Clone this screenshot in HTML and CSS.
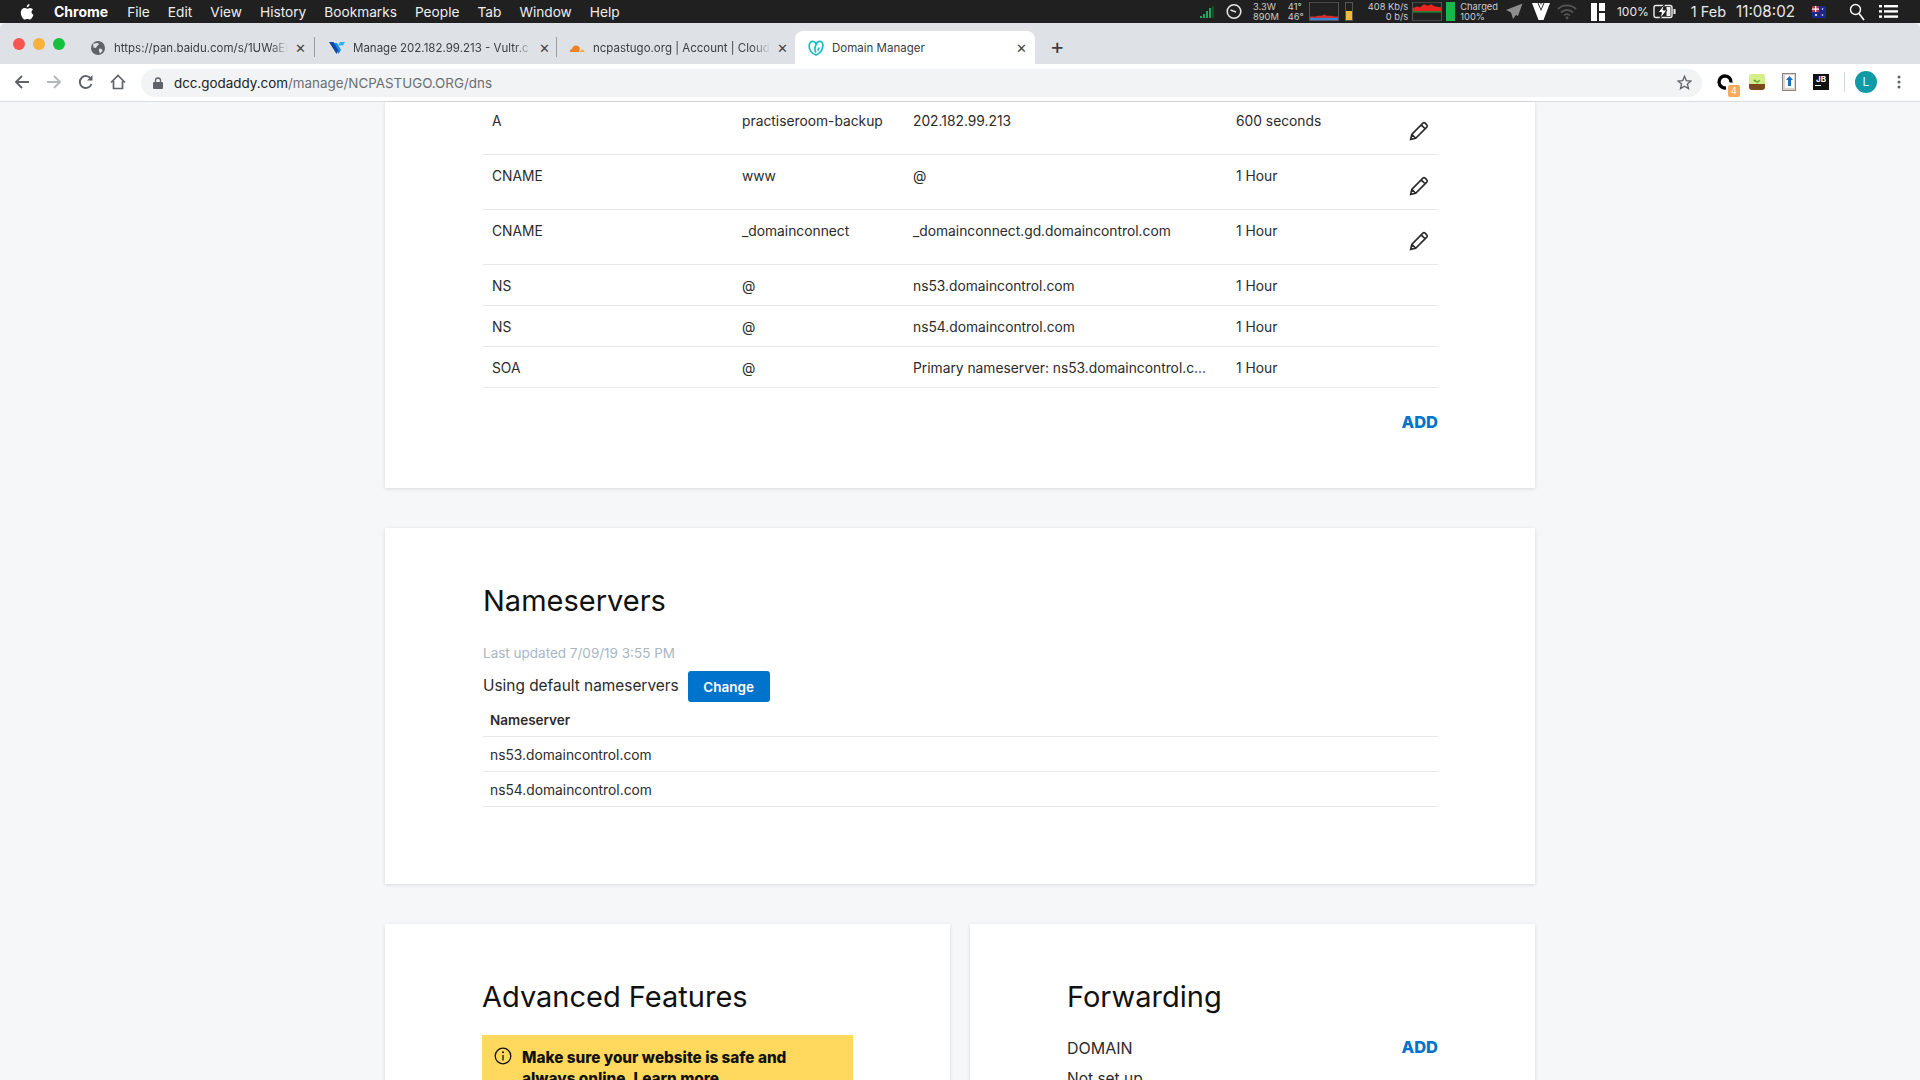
FILE: index.html
```html
<!DOCTYPE html>
<html lang="en">
<head>
  <meta charset="UTF-8">
  <title>Domain Manager</title>
  <link rel="stylesheet" href="styles.css">
</head>
<body>
  <div class="menubar">
    <svg class="apple" width="14" height="16" viewBox="0 0 14 16"><path fill="#fff" d="M9.6 0c.1 1.700-1.300 3.300-2.900 3.200C6.500 1.600 8.100.1 9.600 0zM13 5.400c-1 .7-1.500 1.500-1.500 2.600 0 1.300.8 2.300 2 2.800-.6 1.900-2.100 4.700-3.600 4.700-.9 0-1.400-.6-2.500-.6s-1.700.6-2.500.6C3 15.500.8 11.800.8 8.700c0-3 1.900-4.700 3.700-4.700 1.100 0 1.900.7 2.600.7s1.600-.8 2.900-.8c1.100 0 2.200.5 3 1.500z"/></svg>
    <span class="menu-app">Chrome</span>
    <span class="menu-item">File</span>
    <span class="menu-item">Edit</span>
    <span class="menu-item">View</span>
    <span class="menu-item">History</span>
    <span class="menu-item">Bookmarks</span>
    <span class="menu-item">People</span>
    <span class="menu-item">Tab</span>
    <span class="menu-item">Window</span>
    <span class="menu-item">Help</span>

    <div class="status">
      <svg class="st-signal" width="16" height="14" viewBox="0 0 16 14"><g fill="#1fa855"><rect x="0" y="11" width="2" height="2"/><rect x="3" y="9" width="2" height="4"/><rect x="6" y="6" width="2" height="7"/><rect x="9" y="3" width="2" height="10"/></g><rect x="12" y="1" width="2" height="12" fill="#14502c"/></svg>
      <svg class="st-clock" width="16" height="17" viewBox="0 0 16 17"><circle cx="8" cy="8.500" r="6.800" fill="none" stroke="#e4e4e4" stroke-width="1.600"/><path d="M4.500 7 L10 9" stroke="#e4e4e4" stroke-width="1.500"/></svg>
      <div class="st-two st-power"><span>3.3W</span><span>890M</span></div>
      <div class="st-two st-temp"><span>41°</span><span>46°</span></div>
      <svg class="st-graph" width="30" height="19" viewBox="0 0 31 25" preserveAspectRatio="none"><rect x=".5" y=".5" width="30" height="24" fill="#222" stroke="#555"/><path d="M1 24V19h6l2-1 4 0 3-2 2 2h5l3 1h4v5z" fill="#d92c2c"/><path d="M1 24v-3h29v3z" fill="#2f86d8"/></svg>
      <div class="st-level"><span class="st-level-fill"></span></div>
      <div class="st-two st-net"><span>408 Kb/s</span><span>0 b/s</span></div>
      <svg class="st-graph-net" width="30" height="19" viewBox="0 0 30 25" preserveAspectRatio="none"><rect x=".5" y=".5" width="29" height="24" fill="#222" stroke="#555"/><path d="M1 13V8l4-2 3 1 4-4 4 2 3-2 4 3 6 1v6z" fill="#e8261e"/><rect x="1" y="12" width="28" height="2" fill="#188a3c"/></svg>
      <span class="st-charge"></span>
      <div class="st-two st-charged"><span>Charged</span><span>100%</span></div>
      <svg class="st-plane" width="17" height="17" viewBox="0 0 17 17"><path fill="#8d8d8d" d="M16.500.5 0 7l5 2.500L7 16l3-4 2 1z"/></svg>
      <svg class="st-v" width="18" height="19" viewBox="0 0 18 19"><path fill="#fff" d="M0 1h5.500L9 9l3.500-8H18l-6.500 17h-5zM6.500 1h1.800L9 3l.7-2h1.800L9 7z"/></svg>
      <svg class="st-wifi" width="20" height="17" viewBox="0 0 20 17"><g fill="none" stroke="#555" stroke-width="1.800"><path d="M1 6a13 13 0 0 1 18 0"/><path d="M4 9.500a8.500 8.500 0 0 1 12 0"/><path d="M7 12.500a4 4 0 0 1 6 0"/></g><circle cx="10" cy="15" r="1.400" fill="#555"/></svg>
      <svg class="st-panel" width="14" height="18" viewBox="0 0 14 18"><g fill="#fff"><rect width="6" height="18"/><rect x="8" width="6" height="8"/><rect x="8" y="10" width="6" height="8"/></g></svg>
      <span class="st-text st-percent">100%</span>
      <svg class="st-battery" width="23" height="15" viewBox="0 0 23 15"><rect x="1" y="1.500" width="18" height="12" rx="2" fill="none" stroke="#eee" stroke-width="1.400"/><path fill="#eee" d="M20.500 5h2v5h-2zM13.500 3h4v9h-4z"/><path fill="#fff" stroke="#222" d="M11.500 0 5 8.500h3.500L7 15l7-9h-4z"/></svg>
      <span class="st-text st-date">1 Feb</span>
      <span class="st-text st-time">11:08:02</span>
      <svg class="st-flag" width="14" height="14" viewBox="0 0 14 14"><rect y="1" width="14" height="12" rx="2" fill="#1b2a8a"/><rect y="1" width="7" height="6" fill="#a83a50"/><g fill="#fff"><rect x="3" y="1" width="1.200" height="6"/><rect y="3.500" width="7" height="1.200"/><circle cx="10.500" cy="4" r=".8"/><circle cx="10.500" cy="10" r=".8"/><circle cx="4" cy="10" r="1"/></g></svg>
      <svg class="st-search" width="16" height="18" viewBox="0 0 16 18"><circle cx="6.500" cy="6.500" r="5" fill="none" stroke="#fff" stroke-width="1.400"/><path d="M10 10.500 15 17" stroke="#fff" stroke-width="1.600"/></svg>
      <svg class="st-list" width="19" height="13" viewBox="0 0 19 13"><g fill="#fff"><rect width="3" height="2.400"/><rect x="5" width="14" height="2.400"/><rect y="5.200" width="3" height="2.400"/><rect x="5" y="5.200" width="14" height="2.400"/><rect y="10.400" width="3" height="2.400"/><rect x="5" y="10.400" width="14" height="2.400"/></g></svg>
    </div>
  </div>

  <div class="tabstrip">
    <div class="lights">
      <span class="light light-red"></span>
      <span class="light light-yellow"></span>
      <span class="light light-green"></span>
    </div>
    <div class="tab tab-first">
      <svg width="16" height="16" viewBox="0 0 16 16"><circle cx="8" cy="8" r="7" fill="#5f6368"/><path fill="#dee1e6" d="M3 3.500c2 0 3-.5 5-.5l1 1.500-2 1.500-1 2-2.500-.5zM9 8.500l3 .5 .5 2-2.500 2.500-1-2z"/></svg>
      <span class="tab-title">https://pan.baidu.com/s/1UWaEi</span>
      <span class="tab-close">✕</span>
    </div>
    <div class="tab-sep"></div>
    <div class="tab tab-second">
      <svg width="16" height="16" viewBox="0 0 16 16"><path fill="#1e88e5" d="M4 3h4l4 7-2.500 4z"/><path fill="#0d47a1" d="M0 2h4.500l4.800 8.500L7.500 14z"/><path fill="#29b6f6" d="M11 2h5l-2 3.500h-5z"/></svg>
      <span class="tab-title">Manage 202.182.99.213 - Vultr.c</span>
      <span class="tab-close">✕</span>
    </div>
    <div class="tab-sep"></div>
    <div class="tab tab-third">
      <svg width="16" height="16" viewBox="0 0 16 16"><path fill="#f48120" d="M1 12c-.5-1.500.5-3 2-3 .5-2 2-3.500 4-3.500 1.800 0 3.300 1 3.800 2.600L10 12z"/><path fill="#faad3f" d="M11 12c.5-1.500 1-2.500 2-2.500s2.500 1 2.500 2.500z"/></svg>
      <span class="tab-title">ncpastugo.org | Account | Cloud</span>
      <span class="tab-close">✕</span>
    </div>
    <div class="tab tab-active">
      <svg width="16" height="16" viewBox="0 0 16 16"><path fill="none" stroke="#1bbdc6" stroke-width="1.700" d="M8 15C3 13 1 9 1.200 5.500 1.400 2.500 3.500 1 5.500 1.500 7 2 8 3.500 8 5c.5-2 2-3.800 4-3.700 2.300.2 3.200 2.400 2.800 5C14.300 10 12 13.500 8 15zM8 5C6.800 7 6.600 10 8 12.500M11 7.500c0 1-.5 2.200-1.500 3"/></svg>
      <span class="tab-title">Domain Manager</span>
      <span class="tab-close">✕</span>
    </div>
    <span class="tab-new">+</span>
  </div>

  <div class="toolbar">
    <svg class="nav nav-back" width="16" height="16" viewBox="0 0 16 16"><path d="M15 8H2M8 2 2 8l6 6" fill="none" stroke="#5f6368" stroke-width="1.900"/></svg>
    <svg class="nav nav-fwd" width="16" height="16" viewBox="0 0 16 16"><path d="M1 8h13M8 2l6 6-6 6" fill="none" stroke="#b5b8bb" stroke-width="1.900"/></svg>
    <svg class="nav nav-reload" width="16" height="16" viewBox="0 0 16 16"><path d="M13.500 10a6 6 0 1 1-.5-5" fill="none" stroke="#5f6368" stroke-width="1.900"/><path d="M14.500 1v5.500H9z" fill="#5f6368"/></svg>
    <svg class="nav nav-home" width="16" height="16" viewBox="0 0 16 16"><path d="M1 8.500 8 1.500l7 7M3.500 7v7.500h9V7" fill="none" stroke="#5f6368" stroke-width="1.700"/></svg>
    <div class="omnibox">
      <svg width="10" height="12" viewBox="0 0 10 12"><rect y="5" width="10" height="7" rx="1" fill="#5f6368"/><path d="M2.500 5.500V3.500a2.500 2.500 0 0 1 5 0v2" fill="none" stroke="#5f6368" stroke-width="1.300"/></svg>
      <span class="url"><span class="url-host">dcc.godaddy.com</span>/manage/NCPASTUGO.ORG/dns</span>
      <svg class="star" width="15" height="15" viewBox="0 0 15 15"><path d="M7.500 1.300 9.300 5.600l4.700.4-3.600 3 1.100 4.600-4-2.400-4 2.400 1.100-4.600L1 6l4.700-.4z" fill="none" stroke="#5f6368" stroke-width="1.300"/></svg>
    </div>
    <div class="ext ext-first">
      <svg width="20" height="20" viewBox="0 0 20 20"><path d="M14 10.500a6 6 0 1 0-5 5.400" fill="none" stroke="#000" stroke-width="3.400"/></svg>
      <span class="ext-badge">4</span>
    </div>
    <div class="ext">
      <svg width="16" height="16" viewBox="0 0 16 16"><rect width="16" height="11" rx="2" fill="#d5ee8a"/><path d="M0 10h16v3a3 3 0 0 1-3 3H3a3 3 0 0 1-3-3z" fill="#7a4a1e"/><path d="M8 10V7M8 8C6 8 5 7 4.500 6c2 0 3 .5 3.500 2zM8 8c1.500 0 2.500-.5 3-1.500-1.500 0-2.500.5-3 1.500z" stroke="#5e9c35" fill="#5e9c35" stroke-width=".5"/></svg>
    </div>
    <div class="ext">
      <svg width="16" height="18" viewBox="0 0 16 18"><rect x="1.500" y=".5" width="13" height="17" fill="#d9d4cf" stroke="#8d8580"/><rect x="4" y="2" width="9" height="13" fill="#fff"/><path d="M8.500 3 12 7H10v6H7V7H5z" fill="#1a6fc0"/></svg>
    </div>
    <div class="ext">
      <div class="ext-jb">JB<span></span></div>
    </div>
    <div class="ext-sep"></div>
    <div class="avatar">L</div>
    <svg class="dots" width="4" height="14" viewBox="0 0 4 14"><g fill="#5f6368"><circle cx="2" cy="2" r="1.500"/><circle cx="2" cy="7" r="1.500"/><circle cx="2" cy="12" r="1.500"/></g></svg>
  </div>

  <div class="page">
    <div class="card card-dns">
      <table class="records">
        <tr class="row-tall row-top"><td>A</td><td>practiseroom-backup</td><td>202.182.99.213</td><td>600 seconds</td><td class="cell-edit"><svg width="20" height="20" viewBox="0 0 18 18"><path d="M1.500 16.500l1-4.500L12.500 2a1.500 1.500 0 0 1 2 0l1.500 1.500a1.500 1.500 0 0 1 0 2L6 15.500zM11 3.500 14.500 7M2.500 12 6 15.500" fill="none" stroke="#2b2b2b" stroke-width="1.500"/></svg></td></tr>
        <tr class="row-tall"><td>CNAME</td><td>www</td><td>@</td><td>1 Hour</td><td class="cell-edit"><svg width="20" height="20" viewBox="0 0 18 18"><path d="M1.500 16.500l1-4.500L12.500 2a1.500 1.500 0 0 1 2 0l1.500 1.500a1.500 1.500 0 0 1 0 2L6 15.500zM11 3.500 14.500 7M2.500 12 6 15.500" fill="none" stroke="#2b2b2b" stroke-width="1.500"/></svg></td></tr>
        <tr class="row-tall"><td>CNAME</td><td>_domainconnect</td><td>_domainconnect.gd.domaincontrol.com</td><td>1 Hour</td><td class="cell-edit"><svg width="20" height="20" viewBox="0 0 18 18"><path d="M1.500 16.500l1-4.500L12.500 2a1.500 1.500 0 0 1 2 0l1.500 1.500a1.500 1.500 0 0 1 0 2L6 15.500zM11 3.500 14.500 7M2.500 12 6 15.500" fill="none" stroke="#2b2b2b" stroke-width="1.500"/></svg></td></tr>
        <tr><td>NS</td><td>@</td><td>ns53.domaincontrol.com</td><td>1 Hour</td><td></td></tr>
        <tr><td>NS</td><td>@</td><td>ns54.domaincontrol.com</td><td>1 Hour</td><td></td></tr>
        <tr><td>SOA</td><td>@</td><td><div class="clip">Primary nameserver: ns53.domaincontrol.com.</div></td><td>1 Hour</td><td></td></tr>
      </table>
      <div class="add-row"><a class="add">ADD</a></div>
    </div>

    <div class="card card-ns">
      <h2>Nameservers</h2>
      <p class="updated">Last updated 7/09/19 3:55 PM</p>
      <div class="using">
        <span>Using default nameservers</span>
        <button class="btn-change">Change</button>
      </div>
      <div class="ns-head">Nameserver</div>
      <div class="ns-row">ns53.domaincontrol.com</div>
      <div class="ns-row">ns54.domaincontrol.com</div>
    </div>

    <div class="card-pair">
      <div class="card card-half">
        <h2>Advanced Features</h2>
        <div class="notice">
          <svg width="18" height="18" viewBox="0 0 18 18"><circle cx="9" cy="9" r="7.800" fill="none" stroke="#111" stroke-width="1.300"/><path d="M9 8v5.500" stroke="#111" stroke-width="1.300"/><circle cx="9" cy="5.300" r="1" fill="#111"/></svg>
          <span>Make sure your website is safe and always online. Learn more</span>
        </div>
      </div>
      <div class="card card-half">
        <h2>Forwarding</h2>
        <div class="fwd-head">
          <span>DOMAIN</span>
          <a class="add">ADD</a>
        </div>
        <div class="fwd-value">Not set up</div>
      </div>
    </div>
  </div>
</body>
</html>
```

FILE: styles.css
```css
* {
  box-sizing: border-box;
}

html, body {
  height: 1080px;
  overflow: hidden;
}

body {
  margin: 0;
  font-family: Inter, "Liberation Sans", sans-serif;
  background-color: #f5f7f8;
  color: #2b2b2b;
}

/* mac menu bar */
.menubar {
  display: flex;
  align-items: center;
  height: 23px;
  padding-left: 20px;
  background-color: #202020;
  color: #eee;
  font-size: 13.700px;
}

.menu-app {
  margin-left: 20px;
  margin-right: 19px;
  font-size: 14px;
  font-weight: 700;
  color: #fff;
}

.menu-item {
  margin-right: 18px;
}

.status {
  display: flex;
  align-items: center;
  margin-left: auto;
  font-size: 10px;
}

.status svg {
  flex: none;
}

.st-two {
  display: flex;
  flex-direction: column;
  font-size: 9.300px;
  line-height: 10px;
  color: #ccc;
}

.st-net {
  align-items: flex-end;
}

.st-text {
  font-size: 14px;
  color: #e8e8e8;
}

.st-clock { margin-left: 10px; }
.st-power { margin-left: 11px; }
.st-temp { margin-left: 9px; }
.st-graph { margin-left: 5px; }
.st-net { margin-left: 15px; }
.st-graph-net { margin-left: 4px; }
.st-charged { margin-left: 5px; }
.st-plane { margin-left: 8px; }
.st-v { margin-left: 9px; }
.st-wifi { margin-left: 7px; }
.st-panel { margin-left: 14px; }
.st-percent { margin-left: 12px; font-size: 12px; }
.st-battery { margin-left: 4px; }
.st-date { margin-left: 15px; font-size: 14.500px; }
.st-time { margin-left: 10px; font-size: 15.200px; }
.st-flag { margin-left: 17px; }
.st-search { margin-left: 23px; }
.st-list { margin-left: 14px; margin-right: 22px; }

.st-level {
  display: flex;
  align-items: flex-end;
  width: 8px;
  height: 19px;
  margin-left: 6px;
  border: 1px solid #555;
}

.st-level-fill {
  width: 100%;
  height: 9px;
  background-color: #f5b83d;
}

.st-charge {
  width: 9px;
  height: 19px;
  margin-left: 4px;
  background-color: #18b84a;
}

/* browser tabs */
.tabstrip {
  display: flex;
  align-items: flex-end;
  height: 41px;
  padding-left: 13px;
  background-color: #dee1e6;
  border-top-left-radius: 6px;
  border-top-right-radius: 6px;
  font-size: 11.500px;
  color: #3c4043;
}

.lights {
  display: flex;
  gap: 8px;
  align-self: flex-start;
  margin-top: 15px;
  margin-right: 11px;
}

.light {
  width: 12px;
  height: 12px;
  border-radius: 50%;
}

.light-red { background-color: #f5564f; }
.light-yellow { background-color: #f6b23c; }
.light-green { background-color: #15c13c; }

.tab {
  display: flex;
  align-items: center;
  width: 237px;
  height: 33px;
  padding: 0 4px 0 14px;
}

.tab-first {
  width: 238px;
  padding-right: 6px;
}

.tab-second {
  width: 241px;
}

.tab-third {
  padding-left: 12px;
}

.tab-title {
  flex: 1;
  margin-left: 8px;
  overflow: hidden;
  white-space: nowrap;
  -webkit-mask-image: linear-gradient(to right, #000 90%, transparent);
  mask-image: linear-gradient(to right, #000 90%, transparent);
}

.tab-close {
  width: 16px;
  margin-left: 4px;
  text-align: center;
  font-size: 13px;
  color: #444;
}

.tab-sep {
  width: 1px;
  height: 20px;
  margin-bottom: 7px;
  background-color: #9a9da1;
}

.tab-active {
  width: 240px;
  margin-left: 1px;
  padding-left: 13px;
  padding-right: 6px;
  background-color: #fff;
  border-radius: 8px 8px 0 0;
}

.tab-active .tab-title {
  -webkit-mask-image: none;
  mask-image: none;
}

.tab-new {
  margin: 0 0 4px 15px;
  font-size: 22px;
  font-weight: 400;
  line-height: 28px;
  color: #3c4043;
}

/* address bar */
.toolbar {
  display: flex;
  align-items: center;
  height: 38px;
  padding: 0 0 1px 14px;
  background-color: #fff;
  border-bottom: 1px solid #dadce0;
}

.nav { margin-right: 16px; flex: none; }
.nav-home { margin-right: 15px; }

.omnibox {
  display: flex;
  align-items: center;
  width: 1561px;
  height: 28px;
  margin-top: 1px;
  padding: 0 10px 0 12px;
  background-color: #f1f3f4;
  border-radius: 14px;
  font-size: 13.400px;
  color: #6a6e72;
}

.url {
  margin-left: 11px;
}

.url-host {
  color: #202124;
}

.star {
  margin-left: auto;
}

.ext {
  position: relative;
  display: flex;
  align-items: center;
  justify-content: center;
  width: 32px;
  height: 24px;
}

.ext-first {
  margin-left: 7px;
}

.ext-first svg {
  margin-left: 3px;
}

.ext-badge {
  position: absolute;
  right: 1px;
  bottom: -3px;
  width: 12px;
  height: 12px;
  background-color: #f9ab5c;
  border-radius: 2px;
  font-size: 9px;
  line-height: 12px;
  text-align: center;
  color: #fff;
}

.ext-jb {
  width: 16px;
  height: 16px;
  padding-top: 1px;
  background-color: #111;
  font-size: 8px;
  font-weight: 700;
  line-height: 8px;
  text-align: center;
  color: #fff;
}

.ext-jb span {
  display: block;
  width: 6px;
  height: 1px;
  margin: 2px 0 0 2px;
  background-color: #fff;
}

.ext-sep {
  width: 1px;
  height: 20px;
  margin-left: 7px;
  background-color: #d5d7da;
}

.avatar {
  flex: none;
  width: 22px;
  height: 22px;
  margin-left: 10px;
  background-color: #0f9aa6;
  border-radius: 50%;
  font-size: 12px;
  line-height: 22px;
  text-align: center;
  color: #dff;
}

.dots {
  margin-left: 20px;
  flex: none;
}

/* page */
.page {
  width: 1150px;
  margin-left: 385px;
}

.card {
  padding: 0 97px 0 98px;
  background-color: #fff;
  box-shadow: 0 1px 4px rgba(0, 0, 0, 0.12);
  font-size: 13.800px;
}

.card-dns {
  height: 386px;
  margin-bottom: 40px;
}

.records {
  width: 100%;
  border-collapse: collapse;
  table-layout: fixed;
}

.records td {
  height: 41px;
  padding: 11px 0 0 0;
  border-bottom: 1px solid #e8e8e8;
  vertical-align: top;
  line-height: 20px;
  white-space: nowrap;
}

.records td:nth-child(1) { width: 259px; padding-left: 9px; }
.records td:nth-child(2) { width: 171px; }
.records td:nth-child(3) { width: 323px; }
.records td:nth-child(4) { width: 150px; }

.records .row-tall td {
  height: 55px;
  padding-top: 11px;
}

.records .row-top td {
  height: 52px;
  padding-top: 9px;
}

.records .row-tall .cell-edit {
  padding: 21px 9px 0 0;
  line-height: 0;
  text-align: right;
}

.records .row-top .cell-edit {
  padding-top: 19px;
}

.clip {
  width: 301px;
  overflow: hidden;
  white-space: nowrap;
  text-overflow: ellipsis;
}

.add-row {
  display: flex;
  justify-content: flex-end;
  margin-top: 24px;
}

.add {
  font-size: 16.500px;
  font-weight: 800;
  line-height: 20px;
  color: #0074cc;
}

.card-ns {
  height: 356px;
  margin-bottom: 40px;
  padding-top: 53px;
}

h2 {
  margin: 0;
  font-size: 29px;
  font-weight: 400;
  line-height: 40px;
  color: #111;
}

.updated {
  margin: 22px 0 0;
  font-size: 13.500px;
  line-height: 20px;
  color: #a9b6c1;
}

.using {
  display: flex;
  align-items: center;
  margin-top: 8px;
  font-size: 15.400px;
}

.using span {
  margin-top: -2px;
}

.btn-change {
  width: 82px;
  height: 31px;
  margin-left: 9px;
  background-color: #0074cc;
  border: none;
  border-radius: 3px;
  font-family: inherit;
  font-size: 13.500px;
  font-weight: 600;
  color: #fff;
}

.ns-head {
  height: 35px;
  padding: 8px 0 0 7px;
  border-bottom: 1px solid #e8e8e8;
  font-size: 13.500px;
  font-weight: 600;
  line-height: 20px;
}

.ns-row {
  height: 35px;
  padding: 8px 0 0 7px;
  border-bottom: 1px solid #e8e8e8;
  line-height: 20px;
}

.card-pair {
  display: flex;
  gap: 20px;
}

.card-half {
  flex: 1;
  height: 300px;
  padding-top: 53px;
  padding-left: 97px;
}

.notice {
  display: flex;
  gap: 10px;
  width: 371px;
  margin-top: 18px;
  padding: 12px 14px 0 12px;
  background-color: #ffd95e;
  font-size: 15.300px;
  font-weight: 800;
  line-height: 21px;
  color: #111;
}

.notice svg {
  flex: none;
}

.fwd-head {
  display: flex;
  justify-content: space-between;
  align-items: center;
  margin-top: 21px;
  font-size: 16px;
  line-height: 20px;
}

.fwd-head .add {
  margin-top: -2px;
}

.fwd-value {
  margin-top: 11px;
  font-size: 15.500px;
  line-height: 20px;
}
```
